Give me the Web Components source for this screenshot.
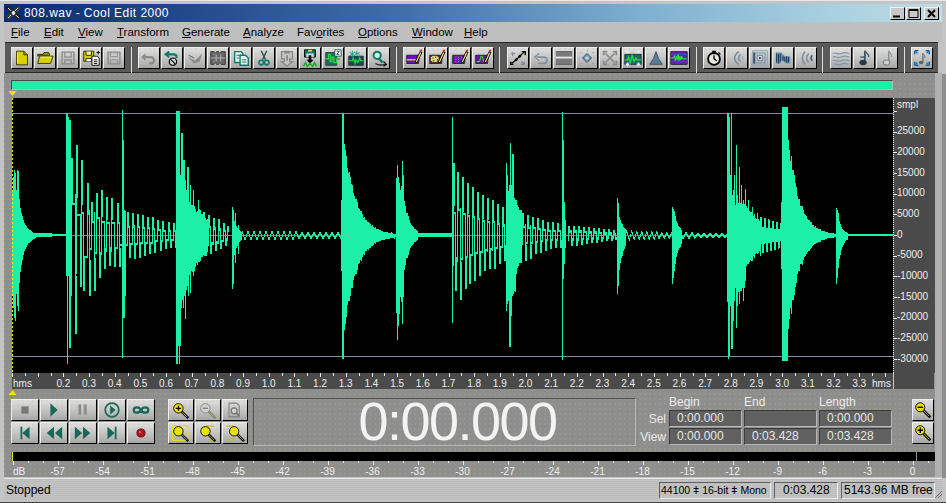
<!DOCTYPE html>
<html><head><meta charset="utf-8"><title>808.wav - Cool Edit 2000</title>
<style>html,body{margin:0;padding:0;width:946px;height:503px;overflow:hidden;background:#c0c0c0}</style>
</head><body>
<ce-app></ce-app>
<script>
const FONT='"Liberation Sans",Arial,sans-serif';
const DOTS='radial-gradient(circle at 1px 1px,rgba(190,190,130,.42) .65px,transparent .75px)';
const DOTSD='radial-gradient(circle at 1px 1px,rgba(150,150,120,.55) .6px,transparent .7px)';
const mag=(cx,cy,r,f,inner='',st='#000')=>`<path d="M${cx+r*.7} ${cy+r*.7}L${cx+r+6} ${cy+r+6}" stroke="${st}" stroke-width="3"/><path d="M${cx+r*.8} ${cy+r*.8}L${cx+r+5} ${cy+r+5}" stroke="#c8c000" stroke-width="1"/><circle cx="${cx}" cy="${cy}" r="${r}" fill="${f}" stroke="${st}"/>${inner}`;
const pencil=`<path d="M13 16L19 4" stroke="#000" stroke-width="3"/><path d="M13.5 15.5L18.5 5" stroke="#f0e060" stroke-width="1.4"/><path d="M18 4l1.5-2" stroke="#e02020" stroke-width="2"/>`;
const purple=(x)=>`<path d="M3 8h14l-1 9H3z" fill="#7010b0" stroke="#202020"/>${x}${pencil}`;
const T='#107868',G='#8a8a8a',Y='#d8d000';
const ICONS={
new:`<path d="M5 3.5h8l4 4v11H5z" fill="${Y}" stroke="#303000"/><path d="M13 3.5v4h4" fill="#989000" stroke="#303000"/><path d="M6 5v12" stroke="#f0f080"/>`,
open:`<path d="M3 7h6l1-2h5l1 2v1H6l-3 1z" fill="#a09800" stroke="#303000"/><path d="M3 17l2-8h15l-3 8z" fill="${Y}" stroke="#303000"/><path d="M6 10h12" stroke="#f8f880"/>`,
save0:`<path d="M4.5 4.5h13v13h-13z" fill="none" stroke="${G}" stroke-width="1.5"/><path d="M7.5 5v5h7V5M7.5 17v-4h7v4" fill="none" stroke="${G}" stroke-width="1.3"/>`,
saveas:`<path d="M3 3.5h11v11H3z" fill="${Y}" stroke="#202000"/><path d="M5.5 4v4h6V4" fill="#f0f0a0" stroke="#202000"/><path d="M5.5 14.5v-3h6v3" fill="#fff" stroke="#202000"/><path d="M12 9h6l2 2v8h-8z" fill="#fff" stroke="#000"/><path d="M14 13h4M14 15h4M14 17h4" stroke="#000"/><path d="M17 5h4M19 3v4" stroke="#000"/>`,
saveall:`<path d="M4.5 4.5h13v13h-13z" fill="none" stroke="${G}" stroke-width="1.5"/><path d="M7 4.5v5h8v-5M8 6.5h1M10.5 6.5h1M13 6.5h1M7 17v-4h8v4" fill="none" stroke="${G}"/>`,
undo0:`<path d="M7 7L4 10l3 3" fill="none" stroke="${G}" stroke-width="2"/><path d="M5 10h8a3.5 3.5 0 0 1 0 7h-2" fill="none" stroke="${G}" stroke-width="2.4"/>`,
undo1:`<path d="M8 4L4 7l4 3" fill="none" stroke="${T}" stroke-width="2.2"/><path d="M5 7h8a3 3 0 0 1 3 3v1" fill="none" stroke="${T}" stroke-width="2.4"/><circle cx="12" cy="15" r="4" fill="#c8d8d0" stroke="#000" stroke-width="1.3"/><path d="M9.500 12.500l5 5" stroke="#000" stroke-width="1.300"/>`,
redo0:`<path d="M3 10l8 4 8-8-3 9-6 2z" fill="${G}"/><path d="M4 8l6 3" stroke="#555"/>`,
mute:`<path d="M3 4h16v14H3z" fill="#666" stroke="#333"/><path d="M3 11h16M6 7h1M6 15h1M14 7v8M9 7v8" stroke="#bbb"/><path d="M7 4h2M12 4h2M7 18h2M12 18h2" stroke="#ddd"/>`,
copy:`<path d="M4 4h7l2 2v10H4z" fill="#e8f4f0" stroke="${T}" stroke-width="1.5"/><path d="M10 8h6l3 3v8H10z" fill="#e8f4f0" stroke="${T}" stroke-width="1.500"/><path d="M6 8h4M6 11h3M12 13h5M12 15.500h5" stroke="${T}"/>`,
cut:`<path d="M8 3l4.500 10M14 3L9.500 13" stroke="#205048" stroke-width="1.500"/><circle cx="8" cy="16" r="2.500" fill="none" stroke="${T}" stroke-width="1.800"/><circle cx="14" cy="16" r="2.500" fill="none" stroke="${T}" stroke-width="1.800"/>`,
paste0:`<path d="M5 4h12v8h-3v3h3l-6 5-6-5h3v-3H5z" fill="#c4c4c4" stroke="${G}" stroke-width="1.500"/><path d="M8 3h6v3H8zM10 8h2v6h-2z" fill="${G}"/>`,
paste1:`<path d="M5 2h12v8H5z" fill="${T}" stroke="#000"/><path d="M9 2h4v2H9z" fill="#f0e020"/><path d="M7 6h8v4H7z" fill="#d0e0e0"/><path d="M11 8v6" stroke="#000" stroke-width="3"/><path d="M7 13h8l-4 4z" fill="#000"/><path d="M4 20l2-4 2 4 3-3 3 3 2-4 2 4" fill="none" stroke="#10b020" stroke-width="1.600"/>`,
waveZ:`<path d="M3 5h12v14H3z" fill="#206860" stroke="#204040"/><path d="M3 12h16" stroke="#e03030" stroke-width="1.500"/><path d="M3 12h3v-5h2v8h2v-5h2v6h3v-4h4" fill="none" stroke="#20e040" stroke-width="1.300"/><path d="M13 2h7v7h-7z" fill="#fff" stroke="#205050"/><path d="M15 4h3l-3 3h3" fill="none" stroke="#205050"/>`,
spark:`<path d="M3 9h16v10H3z" fill="#204858" stroke="#203030"/><path d="M3 14h4l1-3 2 6 1-4 2 3 2-5 1 3h3" fill="none" stroke="#20e040" stroke-width="1.300"/><path d="M7 3v7M4 4.500l6 4M10 4.500l-6 4M12 3v5M10 5l5 2M15 5l-5 2" stroke="#10a890"/>`,
find:`<circle cx="9" cy="8" r="4" fill="#d0f0e0" stroke="${T}" stroke-width="2.200"/><path d="M11 12l4 4" stroke="${T}" stroke-width="2.500"/><path d="M7 17c3 2 7 2 11 1" fill="none" stroke="#303030" stroke-width="1.500"/><path d="M16 15l3 3-3 2" fill="none" stroke="#000" stroke-width="1.500"/>`,
p1:purple(`<path d="M3 13h11" stroke="#c8e020" stroke-width="1.500"/>`),
p2:purple(`<ellipse cx="8.500" cy="12" rx="5" ry="4" fill="#e8d880" stroke="#302800"/><path d="M6 11h1M9 10h1M11 13h1M7 14h1" stroke="#000" stroke-width="1.300"/>`),
p3:purple(`<path d="M6 10h1M9 10h1M12 10h1M6 12.500h1M9 12.500h1M12 12.500h1M6 15h1M9 15h1M12 15h1" stroke="#40e020" stroke-width="1.500"/>`),
p4:purple(`<path d="M4 15h3c1 0 1-6 2-6h1c1 0 1 6 2 6h3" fill="none" stroke="#40e020" stroke-width="1.200"/>`),
env:`<path d="M4 17L9 13L13 9L18 4" stroke="#000" stroke-width="1.500"/><path d="M15 4h4v4M3 15v3h3" fill="none" stroke="#000" stroke-width="1.600"/><circle cx="9" cy="13" r="1.500" fill="#000"/><circle cx="13" cy="9" r="1.500" fill="#000"/><path d="M4 5l2 2M15 15l3 3" stroke="#8090a0" stroke-width="2"/><path d="M5 9v-3h3M14 18h4v-3" fill="none" stroke="#8090a0" stroke-width="1.300"/>`,
ret:`<path d="M9 6L4 10l5 4" fill="#c8d0d8" stroke="#8090a0" stroke-width="1.300"/><path d="M6 10h8a3 3 0 0 1 0 7H8" fill="none" stroke="#8090a0" stroke-width="2"/>`,
bar:`<path d="M2 4h18v14H2z" fill="#7a7a7a"/><path d="M2 10.500h18" stroke="#e8e8e8" stroke-width="2"/><path d="M2 4h18M2 18h18" stroke="#5a5a5a"/>`,
diamond:`<path d="M11 6l5 5-5 5-5-5z" fill="#7090a8" stroke="#405060"/><circle cx="11" cy="11" r="2" fill="#c0d0e0"/><path d="M4 5h1M17 5h1M4 17h1M17 17h1M11 3h1M11 19h1M2 11h1M19 11h1" stroke="#909090"/>`,
xarr:`<path d="M6 6l10 10M16 6L6 16" stroke="${G}" stroke-width="1.800"/><path d="M3 3h5v2H5v3H3zM19 3h-5v2h3v3h2zM3 19h5v-2H5v-3H3zM19 19h-5v-2h3v-3h2z" fill="${G}"/>`,
wv4:`<path d="M2 7h18v11H2z" fill="#206070" stroke="#203030"/><path d="M2 13h3l1-3 2 6 2-8 2 7 2-4 1 2h5" fill="none" stroke="#20e030" stroke-width="1.500"/><path d="M5 6V2M3 4h4M17 6V2M15 4h4M5 20v-4M3 18h4M17 20v-4M15 18h4" stroke="#d8e8f8" stroke-width="1.800"/>`,
tri:`<path d="M11 4l3 8 4 6H4l4-6z" fill="#5a7a98" stroke="#405060"/>`,
pw:`<path d="M2 4h18v14H2z" fill="#6820a8" stroke="#202020"/><path d="M2 7h18M2 15h18" stroke="#4050c8"/><path d="M2 11h3l1-3 1 6 1-5 1 4 1-6 1 7 1-5 1 4 1-4 1 3h5" fill="#20f030" stroke="#20f030"/>`,
watch:`<circle cx="11" cy="12" r="6.500" fill="#e8e8e0" stroke="#000" stroke-width="2"/><path d="M9 3h4v2H9z" fill="#000"/><path d="M11 5v2M11 12V8M11 12l3 2" stroke="#000" stroke-width="1.500"/><path d="M16 5l2 2" stroke="#000" stroke-width="1.500"/>`,
arcs1:`<path d="M13 4c-6 4-6 10 0 14" fill="none" stroke="#7890a0" stroke-width="1.800"/><path d="M15 7c-3 2-3 6 0 8" fill="none" stroke="#7890a0" stroke-width="1.800"/><path d="M18 9c-1.500 1-1.500 3 0 4" fill="none" stroke="#9aaab8" stroke-width="1.400"/>`,
spiral:`<path d="M3 3h16v16H3z" fill="none" stroke="#90a4b8" stroke-width="1.200"/><path d="M5.500 5.500h11v11h-11z" fill="none" stroke="#7890a8" stroke-width="1.200"/><path d="M8 8h6v6H8z" fill="#d0d8e0" stroke="#607890"/><path d="M10 9.500l3 1.500-3 1.500z" fill="#203040"/><path d="M4.500 5v12" stroke="#304860" stroke-width="1.800"/>`,
blob:`<path d="M3 5h6c2 2 2 2 4 4h6v8h-5c-2-2-3-3-5-3v3H3z" fill="#6890b0"/><path d="M4 6v10M6 7v10M8 6v9M11 9v5M13 10v5M15 9v7M17 10v6" stroke="#203858" stroke-width="1.100"/>`,
arcs2:`<path d="M10 4c-4 4-4 10 0 14M14 6c-3 3-3 7 0 10" fill="none" stroke="#7890a0" stroke-width="1.800"/><path d="M18 8c-2 2-2 4 0 6" fill="none" stroke="#405868" stroke-width="1.800"/>`,
wavy:`<path d="M2 6c3-2 5 2 9 0s6-1 9 0M2 10c3-2 5 2 9 0s6-1 9 0M2 14c3-2 5 2 9 0s6-1 9 0M3 18c3-2 5 2 8 0s6-1 8 0" fill="none" stroke="#8098a8" stroke-width="1.300"/>`,
note1:`<path d="M12 3v12" stroke="#203040" stroke-width="1.500"/><path d="M12 3c1 3 5 3 4 7" fill="none" stroke="#506070" stroke-width="1.500"/><ellipse cx="10" cy="16" rx="4" ry="3" fill="#283848"/><path d="M7 10h4" stroke="#607080" stroke-width="2"/>`,
note2:`<path d="M13 3v13" stroke="#808890" stroke-width="1.500"/><path d="M13 3c1 3 4 4 3 7" fill="none" stroke="#98a0a8" stroke-width="1.500"/><ellipse cx="10.500" cy="16" rx="3.500" ry="2.800" fill="#d0d0d0" stroke="#808890" stroke-width="1.300"/>`,
note3:`<path d="M12 6v10" stroke="#506878" stroke-width="1.300"/><ellipse cx="10" cy="16" rx="2.500" ry="2" fill="#506878"/><path d="M12 6c1 2 3 2 2 5" fill="none" stroke="#506878"/><path d="M3 3h4M3 3v4M19 3h-4M19 3v4M3 19h4M3 19v-4M19 19h-4M19 19v-4" stroke="#1868a8" stroke-width="1.800"/><path d="M4 4l2 2M18 4l-2 2M4 18l2-2M18 18l-2-2" stroke="#1868a8" stroke-width="1.300"/>`,
stop:`<path d="M10 7h8v8h-8z" fill="#787878"/>`,
play:`<path d="M10 3.500L18 11l-8 7.500z" fill="#186858"/>`,
pause:`<path d="M9 5h3v11H9zM15 5h3v11h-3z" fill="#8a8a8a"/><path d="M9 5v11M15 5v11" stroke="#a8a8a8"/>`,
cplay:`<circle cx="14" cy="11" r="7.500" fill="none" stroke="#186858" stroke-width="1.800"/><path d="M12 6l6 5-6 5z" fill="#186858"/>`,
loop:`<path d="M14 11c-2-4-8-4-8 0s6 4 8 0c2-4 8-4 8 0s-6 4-8 0z" fill="none" stroke="#186858" stroke-width="2.500"/>`,
start:`<path d="M9 4h2v14H9z" fill="#186858"/><path d="M19 4v14l-8-7z" fill="#186858"/>`,
rew:`<path d="M14 4v14L6 11zM23 4v14l-8-7z" fill="#186858"/>`,
ff:`<path d="M5 4v14l8-7zM14 4v14l8-7z" fill="#186858"/>`,
end:`<path d="M9 4v14l8-7z" fill="#186858"/><path d="M17 4h2v14h-2z" fill="#186858"/>`,
rec:`<circle cx="14" cy="11" r="4.500" fill="#b01020" stroke="#701010"/><circle cx="13" cy="10" r="1.500" fill="#e05050"/>`,
zin:mag(11,9,5.500,'#e8e000',`<path d="M8 9h6M11 6v6" stroke="#000" stroke-width="1.500"/>`),
zout0:mag(11,9,5.500,'#d0d0d0',`<path d="M8 9h6" stroke="#808080" stroke-width="1.500"/>`,'#808080'),
zpage:`<path d="M7 3h9l3 3v13H7z" fill="none" stroke="#808080" stroke-width="1.300"/><circle cx="13" cy="12" r="3.500" fill="#d0d0d0" stroke="#707070" stroke-width="1.300"/><path d="M15.500 14.500l3 3" stroke="#707070" stroke-width="2"/>`,
zsel:`<path d="M4 2.500h18v17H4z" fill="none" stroke="#e8e000" stroke-width="1.500"/>`+mag(11,9,5.500,'#e8e000'),
zleft:`<path d="M21 3h-9M14 19h7" fill="none" stroke="#c8c000" stroke-width="1.500"/>`+mag(11,9,5.500,'#e8e000'),
zright:`<path d="M4 3h8M4 19h8V16" fill="none" stroke="#c8c000" stroke-width="1.500"/>`+mag(13,9,5.500,'#e8e000'),
zo:mag(8,8,5,'#e8e000',`<path d="M5 8h6" stroke="#000" stroke-width="1.500"/>`),
zi:mag(8,8,5,'#e8e000',`<path d="M5 8h6M8 5v6" stroke="#000" stroke-width="1.500"/>`)
};
function def(name,html,setup){
  const t=document.createElement('template');t.innerHTML=html;
  customElements.define(name,class extends HTMLElement{
    constructor(){super();this.attachShadow({mode:'open'}).appendChild(t.content.cloneNode(true));}
    connectedCallback(){if(setup&&!this._d){this._d=1;setup.call(this,this.shadowRoot);}}
  });
}
def('ce-btn',`<style>:host{display:block;width:var(--w,22px);height:22px;box-sizing:border-box;border:1px solid;border-color:#eee #000 #000 #eee;background:${DOTS} 0 0/5px 5px,linear-gradient(#dedede,#c8c8c8 45%,#a6a6a6)}svg{display:block;width:100%;height:100%;margin:0}</style><svg></svg>`,function(r){
  const w=parseFloat(this.getAttribute('w')||22);const s=r.querySelector('svg');
  s.setAttribute('viewBox',`0 0 ${w>22?28:22} 22`);
  if(w>22){s.setAttribute('preserveAspectRatio','xMidYMid meet');}
  s.innerHTML=ICONS[this.getAttribute('icon')]||'';
  if(w>22)this.style.setProperty('--w',w+'px');
});
def('ce-titlebar',`<style>
:host{display:flex;align-items:center;height:18px;background:linear-gradient(90deg,#0a2a72,#3f6ea8 42%,#7fb0d0 68%,#a8d0e0 88%,#c0dce4);color:#fff;font:12px/18px ${FONT};letter-spacing:.45px}
svg{width:17px;height:16px;margin:0 2px 0 1px;flex:none}
span{flex:1;white-space:nowrap}
.c{display:flex;margin-right:3px}
b{display:block;box-sizing:border-box;width:15px;height:13px;background:#c8c8c8;border:1px solid;border-color:#f0f0f0 #000 #000 #f0f0f0;margin-left:1px;position:relative}
b:last-child{margin-left:3px}
svg.g{width:13px;height:11px;margin:0;display:block}
</style>
<svg viewBox="0 0 17 16"><path d="M1 3L4 1L16 12L13 15z" fill="#202020"/><path d="M13 1L16 3L4 15L1 12z" fill="#404040"/><path d="M3 3l11 10M13 3L3 13" stroke="#e8e8e8"/><circle cx="8.500" cy="8" r="2.500" fill="#e8e8e8" stroke="#101010"/></svg>
<span><slot></slot></span>
<div class="c"><b><svg class="g" viewBox="0 0 13 11"><path d="M2 8.500h7" stroke="#000" stroke-width="2"/></svg></b><b><svg class="g" viewBox="0 0 13 11"><path d="M2 1.500h9v8H2z" fill="none" stroke="#000"/><path d="M2 2h9" stroke="#000" stroke-width="2"/></svg></b><b><svg class="g" viewBox="0 0 13 11"><path d="M3 2l7 7M10 2L3 9" stroke="#000" stroke-width="2"/></svg></b></div>`);
def('ce-menubar',`<style>:host{display:grid;grid-template-columns:33px 34px 39px 65px 61px 54px 61px 54px 52px auto;height:20px;padding-left:7px;align-items:center;color:#000;font:11.5px/20px ${FONT};background:#bfbfbf}::slotted(*){white-space:nowrap}</style><slot></slot>`);
def('ce-tools',`<style>:host{display:flex;height:31px;box-sizing:border-box;margin:0 4px 0 1px;padding-top:4px;background:${DOTSD} 0 0/4px 4px,#5a5a5a;border-top:1px solid #2a2a2a;border-bottom:1px solid #2a2a2a}</style><slot></slot>`);
def('ce-tgroup',`<style>:host{display:flex;gap:1px;box-sizing:border-box;height:26px;padding:0 0 0 var(--p,6px);border-right:1px solid #e0e0e0;width:var(--gw);flex:none}:host(:last-child){border-right:0}</style><slot></slot>`);
def('ce-overview',`<style>:host{display:block;height:10px;box-sizing:border-box;margin-left:7px;width:882px;background:#1cf0a8;border:1px solid;border-color:#4a4a4a #b8b8b8 #b8b8b8 #4a4a4a}</style>`);
def('ce-marker',`<style>:host{display:block;height:8px;padding-left:4px;box-sizing:border-box}:host([up]){height:9px}svg{display:block;width:9px;height:5px;margin-top:1px}</style><svg viewBox="0 0 10 6"></svg>`,function(r){
  r.querySelector('svg').innerHTML=this.hasAttribute('up')?'<path d="M5 0L10 6H0z" fill="#f0e000"/>':'<path d="M0 0H10L5 6z" fill="#f0e000"/>';
});
function buildWave(){
  const spans=[];const C=137,X=12;
  const s=(x,a,b)=>{spans.push([Math.round(x),Math.round(a),Math.round(b)]);};
  const rnd=(i)=>{const v=Math.sin(i*12.9898)*43758.5453;return v-Math.floor(v);};
  const ripple=(x0,x1,a0,a1,p)=>{for(let x=x0;x<x1;x++){const a=a0+(a1-a0)*(x-x0)/(x1-x0);const y=Math.round(a*Math.sin(2*Math.PI*x/p));s(x,y+1,-y+1);}};
  const env=(x0,x1,u,d,tau)=>{for(let x=x0;x<x1;x++){const k=Math.exp(-(x-x0)/tau),n=.9+.2*rnd(x);s(x,Math.max(1,u*k*n),Math.max(1,d*k*n));}};
  const pts=(...l)=>l.forEach(p=>{for(let i=0;i<(p[3]||1);i++)s(p[0]+i,p[1],p[2]);});
  const teeth=(ups,dns,r=.42)=>{
    const all=ups.map(p=>[p[0],p[1],1]).concat(dns.map(p=>[p[0],p[1],0])).sort((a,b)=>a[0]-b[0]);
    all.forEach((t,i)=>{const n=all[i+1];const a=Math.max(2,t[1]*r);
      if(t[2]){s(t[0],t[1],a);s(t[0]+1,t[1],-a);}else{s(t[0],a,t[1]);s(t[0]+1,-a,t[1]);}
      if(n){const b=Math.max(2,Math.min(t[1],n[1])*r);for(let x=t[0]+1;x<n[0];x++){if(t[2])s(x,b,-b+1);else s(x,-b+1,b);}}
    });
  };
  // first hit
  env(12,20,48,62,28);pts([14,65,82],[15,62,85],[17,65,70,1],[18,64,75]);
  env(20,36,26,34,5.500);for(let x=36;x<66;x++)s(x,x<52?2:1,x<52?1:0);pts([13,58,72,2]);
  // long tom 1
  pts([66,122,40],[67,122,128],[68,118,40],[69,115,112,2],[71,77,60]);
  teeth([[71,77],[76,90],[81,75],[87,52],[91,33],[96,42],[101,45],[106,38],[111,37],[117,32],[127,23],[132,22],[137,21],[142,20],[147,18],[152,18],[157,15],[162,14],[168,13],[173,12]],
        [[75,98],[80,51],[83,55],[89,60],[94,55],[99,42],[104,33],[109,30],[114,31],[119,31],[129,22],[134,23],[139,22],[144,20],[149,18],[154,17],[160,15],[165,13],[170,12],[175,12]]);
  pts([122,125,122],[123,95,82],[124,25,82],[125,24,60]);
  // hit 176
  pts([176,124,128],[177,124,128],[178,124,110],[179,124,128],[180,60,110],[181,102,72]);
  env(182,198,52,62,18);pts([182,102,60],[183,75,72],[184,75,60],[185,55,83],[187,68,50],[188,68,60],[190,50,57],[193,45,40],[198,35,25]);
  env(198,208,28,28,14);
  teeth([[203,23],[208,20],[213,17],[218,16],[223,12],[227,9]],[[205,20],[210,18],[215,15],[220,13],[225,10]],.5);
  pts([232,28,53],[233,25,48]);env(232,242,22,30,4.500);pts([235,22,27],[238,10,18]);ripple(242,342,4,2,6);
  // 342
  pts([342,122,123,2],[341,35,35]);env(344,395,92,95,12);ripple(377,396,3,2,5);
  // 396
  env(396,404,55,75,30);pts([397,70,104],[398,58,90],[399,50,78],[402,74,88],[403,60,60]);env(404,418,34,34,6);for(let x=418;x<452;x++)s(x,2,1);
  // tom 2
  pts([452,118,87]);
  teeth([[453,72],[457,63],[462,58],[467,52],[472,48],[477,43],[482,40],[487,37],[492,35],[497,31],[502,28]],
        [[455,55],[460,64],[465,53],[469,48],[474,45],[479,40],[484,35],[489,33],[494,33],[499,28],[504,25]]);
  env(506,516,42,62,40);pts([506,72,75],[507,60,68],[509,50,111],[510,92,111],[511,50,80],[512,81,60],[513,81,58],[515,35,56]);
  env(516,522,35,38,12);
  teeth([[522,22],[527,20],[532,18],[537,17],[542,15],[547,13],[552,13],[557,12]],[[525,25],[530,23],[535,18],[540,17],[545,15],[550,13],[555,12],[560,12]]);
  pts([562,123,124],[563,95,43],[564,33,28],[565,15,12]);
  teeth([[568,9],[573,9],[578,9],[583,8],[588,8],[593,7],[598,7],[603,6],[608,6],[613,5]],[[571,10],[576,10],[581,9],[586,8],[591,7],[596,7],[601,6],[606,5],[611,5],[615,4]],.5);
  // 617
  pts([617,37,58],[618,32,50]);env(619,626,20,37,5);ripple(626,672,4,2,5);
  // 672
  pts([672,28,48],[673,26,42]);env(674,682,22,32,5);ripple(682,727,2,1,6);
  // 727
  env(727,745,38,65,60);pts([727,122,40],[728,122,123],[729,118,120],[730,60,70],[731,122,113],[732,40,113],[733,45,85],[734,60,65],[736,90,92],[737,40,70],[739,68,68],[741,50,55],[743,35,65]);
  env(745,760,30,32,20);pts([745,46,45],[748,35,28],[752,28,25],[757,22,18],[760,18,20]);
  for(let x=760;x<781;x++){const a=18-(x-760)*.3;s(x,x%4<2?a:a*.45,x%4>=2?a:a*.45);}
  // 781
  pts([781,33,33],[782,128,125,6]);env(788,836,95,93,11);pts([788,95,93],[789,82,80]);
  // 836
  pts([836,27,48],[837,25,42],[838,22,32]);env(839,848,14,24,4);
  for(let x=848;x<893;x++)s(x,1,0);
  let d='';spans.forEach(p=>{d+=`M${p[0]-X} ${C-p[1]}h1V${C+p[2]+1}h-1z`;});
  return d;
}
def('ce-wave',`<style>:host{display:block;width:881px;height:275px;flex:none;background:#000}svg{display:block}</style><svg width="881" height="275" viewBox="0 0 881 275" shape-rendering="crispEdges"><path d="M0 15.500H881M0 258.500H881" stroke="#8488a4"/><path d="M0 137.500H881" stroke="#7c7c80"/><path id="w" fill="#1cf0a8"/><path d="M.5 0V275" stroke="#f0e800" stroke-dasharray="2 2"/></svg>`,function(r){r.getElementById('w').setAttribute('d',buildWave());});
def('ce-amp',`<style>:host{display:flex;flex-direction:column;width:42px;height:275px;flex:none;box-sizing:border-box;padding-left:3px;color:#eee;font:10px ${FONT};background:repeating-linear-gradient(180deg,transparent 0 13px,#eee 13px 14px,transparent 14px 20.67px) 0 0/3px 100% no-repeat,${DOTSD} 0 0/4px 4px,#4a4a4a;border-left:1px dotted #fff}
::slotted(*){display:block;height:20.67px;line-height:20.67px;white-space:nowrap}::slotted(:first-child){height:23.400px;line-height:14px}</style><slot></slot>`);
def('ce-timeruler',`<style>:host{display:flex;width:881px;height:16px;flex:none;color:#eee;font:10px/22px ${FONT};background:repeating-linear-gradient(90deg,#e8e8e8 0 1px,transparent 1px 12.84px) 0 0/100% 3px no-repeat,repeating-linear-gradient(90deg,#e8e8e8 0 1px,transparent 1px 25.68px) 0 0/100% 4px no-repeat,${DOTSD} 0 0/4px 4px,#4a4a4a}
::slotted(*){flex:0 0 25.68px;text-align:center;white-space:nowrap}::slotted(.h){flex:0 0 38.52px;text-align:left;padding-left:1px;box-sizing:border-box}::slotted(.e){flex:0 0 20.700px;text-align:right;padding-right:3px;box-sizing:border-box}</style><slot></slot>`);
def('ce-wavearea',`<style>:host{display:flex;flex-wrap:wrap;margin-left:8px;width:923px}.rb{width:41px;height:16px;box-sizing:border-box;background:${DOTSD} 0 0/4px 4px,#4a4a4a;border-left:1px solid #c8c8c8}</style><slot></slot><div class="rb"></div>`);
def('ce-transport',`<style>:host{display:flex;height:48px;padding-left:7px;box-sizing:border-box}.t{display:grid;grid-template-columns:repeat(5,28px);grid-auto-rows:22px;gap:1px;margin-top:1px}.z{display:grid;grid-template-columns:repeat(3,26px);grid-auto-rows:22px;gap:1px;margin:1px 5px 0 13px}.r{display:grid;grid-auto-rows:22px;gap:1px;margin:1px 0 0 19px}</style><div class="t"><slot name="t"></slot></div><div class="z"><slot name="z"></slot></div><slot name="d"></slot><slot name="i"></slot><div class="r"><slot name="r"></slot></div>`);
def('ce-clock',`<style>:host{display:flex;align-items:center;justify-content:center;box-sizing:border-box;width:383px;height:48px;color:#f2f4f4;font:54px/46px ${FONT};letter-spacing:-1.500px;border:1px solid;border-color:#505050 #b8b8b8 #b8b8b8 #505050;padding-bottom:2px;padding-left:26px}</style><slot></slot>`);
def('ce-info',`<style>:host{display:grid;width:257px;height:48px;box-sizing:border-box;grid-template-columns:33px 75px 75px 74px;grid-template-rows:12px 18px 18px;color:#ececec;font:12px/12px ${FONT}}::slotted(.l){text-align:right;padding-right:3px;line-height:18px;display:block}::slotted(.e){display:block;white-space:nowrap;margin-top:-2px}</style><slot></slot>`);
def('ce-field',`<style>:host{display:block;box-sizing:border-box;width:73px;height:17px;padding-left:7px;color:#e8e8e8;font:12px/15px ${FONT};background:${DOTSD} 0 0/4px 4px,#606060;border:1px solid;border-color:#3c3c3c #b8b8b8 #b8b8b8 #3c3c3c}</style><slot></slot>`);
def('ce-meter',`<style>:host{display:block;margin:6px 8px 0 8px;height:25px}.b{width:923px;margin-left:-1px;height:9px;background:#000;position:relative;border-left:1px solid #666}.c{position:absolute;left:0;top:0;width:1px;height:9px;background:#f0e800}.o{position:absolute;left:904px;top:0;width:1px;height:9px;background:#909090}.s{display:flex;width:922px;height:16px;color:#eee;font:10px/22px ${FONT};background:repeating-linear-gradient(90deg,#e8e8e8 0 1px,transparent 1px 15px) 0 0/100% 2px no-repeat,repeating-linear-gradient(90deg,#e8e8e8 0 1px,transparent 1px 45px) 0 0/100% 4px no-repeat;background-position:1px 0,1px 0}::slotted(*){flex:0 0 45px;text-align:center}::slotted(.d){flex:0 0 23px;text-align:left;padding-left:1px;box-sizing:border-box}</style><div class="b"><div class="c"></div><div class="o"></div></div><div class="s"><slot></slot></div>`);
def('ce-status',`<style>:host{display:flex;height:22px;padding:3px 0 2px 2px;box-sizing:border-box;margin-top:1px;background:repeating-linear-gradient(0deg,#bcbcbc 0 1px,#c4c4c4 1px 2px);border-top:1px solid #e8e8e8;color:#000;font:12px/17px ${FONT}}
::slotted(.m){flex:1}.g{width:7px;height:17px;flex:none;align-self:flex-end}</style><slot></slot><svg class="g" viewBox="0 0 7 17"><path d="M0 17L7 10M3 17l4-4" stroke="#707070"/></svg>`);
def('ce-pane',`<style>:host{display:block;box-sizing:border-box;height:17px;margin-left:var(--m,3px);width:var(--pw);padding-left:var(--pl,2px);white-space:nowrap;overflow:hidden;border:1px solid;border-color:#606060 #eee #eee #606060;color:#000;font:var(--fs,12px)/15px ${FONT}}</style><slot></slot>`);
const groups=[['new','open','save0','saveas','saveall'],['undo0','undo1','redo0','mute','copy','cut','paste0','paste1','waveZ','spark','find'],['p1','p2','p3','p4'],['env','ret','bar','diamond','xarr','wv4','tri','pw'],['watch','arcs1','spiral','blob','arcs2'],['wavy','note1','note2'],['note3']];
const gw=[127,265,103,197,126,82,33];
const gp=[6,6,6,7,6,7,6];
const tg=groups.map((g,i)=>`<ce-tgroup style="--gw:${gw[i]}px;--p:${gp[i]}px">${g.map(n=>`<ce-btn icon="${n}"></ce-btn>`).join('')}</ce-tgroup>`).join('');
const tl=[];for(let i=2;i<=33;i++)tl.push(`<span>${(i/10).toFixed(1)}</span>`);
const amps=['25000','20000','15000','10000','5000','0','-5000','-10000','-15000','-20000','-25000','-30000'];
const db=[];for(let v=-57;v<=0;v+=3)db.push(`<span>${v}</span>`);
const tb=(n,slot,w)=>`<ce-btn icon="${n}" slot="${slot}" w="${w}"></ce-btn>`;
def('ce-app',`<style>:host{display:flex;flex-direction:column;box-sizing:border-box;width:946px;height:503px;padding:4px 4px 2px;background:linear-gradient(#8e8e8e,#8e8e8e) right 73px/4px 404px no-repeat,#c4c4c4;border-top:1px solid #e8e8e8;border-bottom:1px solid #404040;font-family:${FONT}}
.main{flex:1;min-height:0;display:flex;flex-direction:column;padding-top:7px;background:linear-gradient(#b0b0b0,#b0b0b0) right 0/7px 100% no-repeat,${DOTS} 0 0/5px 5px,#8e8e8e}</style>
<ce-titlebar style="margin-top:-1px">808.wav - Cool Edit 2000</ce-titlebar>
<ce-menubar><span><u>F</u>ile</span><span><u>E</u>dit</span><span><u>V</u>iew</span><span><u>T</u>ransform</span><span><u>G</u>enerate</span><span><u>A</u>nalyze</span><span>Fav<u>o</u>rites</span><span><u>O</u>ptions</span><span><u>W</u>indow</span><span><u>H</u>elp</span></ce-menubar>
<ce-tools>${tg}</ce-tools>
<div class="main">
<ce-overview></ce-overview><ce-marker></ce-marker>
<ce-wavearea><ce-wave></ce-wave><ce-amp><span>smpl</span>${amps.map(a=>`<span>${a}</span>`).join('')}</ce-amp>
<ce-timeruler><span class="h">hms</span>${tl.join('')}<span class="e">hms</span></ce-timeruler></ce-wavearea>
<ce-marker up></ce-marker>
<ce-transport>
${tb('stop','t',28)}${tb('play','t',28)}${tb('pause','t',28)}${tb('cplay','t',28)}${tb('loop','t',28)}${tb('start','t',28)}${tb('rew','t',28)}${tb('ff','t',28)}${tb('end','t',28)}${tb('rec','t',28)}
${tb('zin','z',26)}${tb('zout0','z',26)}${tb('zpage','z',26)}${tb('zsel','z',26)}${tb('zleft','z',26)}${tb('zright','z',26)}
<ce-clock slot="d">0:00.000</ce-clock>
<ce-info slot="i"><span></span><span class="e">Begin</span><span class="e">End</span><span class="e">Length</span><span class="l">Sel</span><ce-field>0:00.000</ce-field><ce-field></ce-field><ce-field>0:00.000</ce-field><span class="l">View</span><ce-field>0:00.000</ce-field><ce-field>0:03.428</ce-field><ce-field>0:03.428</ce-field></ce-info>
<ce-btn icon="zo" slot="r"></ce-btn><ce-btn icon="zi" slot="r"></ce-btn>
</ce-transport>
<ce-meter><span class="d">dB</span>${db.join('')}</ce-meter>
</div>
<ce-status><span class="m">Stopped</span><ce-pane style="--pw:112px;--pl:1px;--fs:10.5px">44100 ǂ 16-bit ǂ Mono</ce-pane><ce-pane style="--pw:64px;--pl:8px">0:03.428</ce-pane><ce-pane style="--pw:94px">5143.96 MB free</ce-pane></ce-status>`);
</script>
</body></html>
